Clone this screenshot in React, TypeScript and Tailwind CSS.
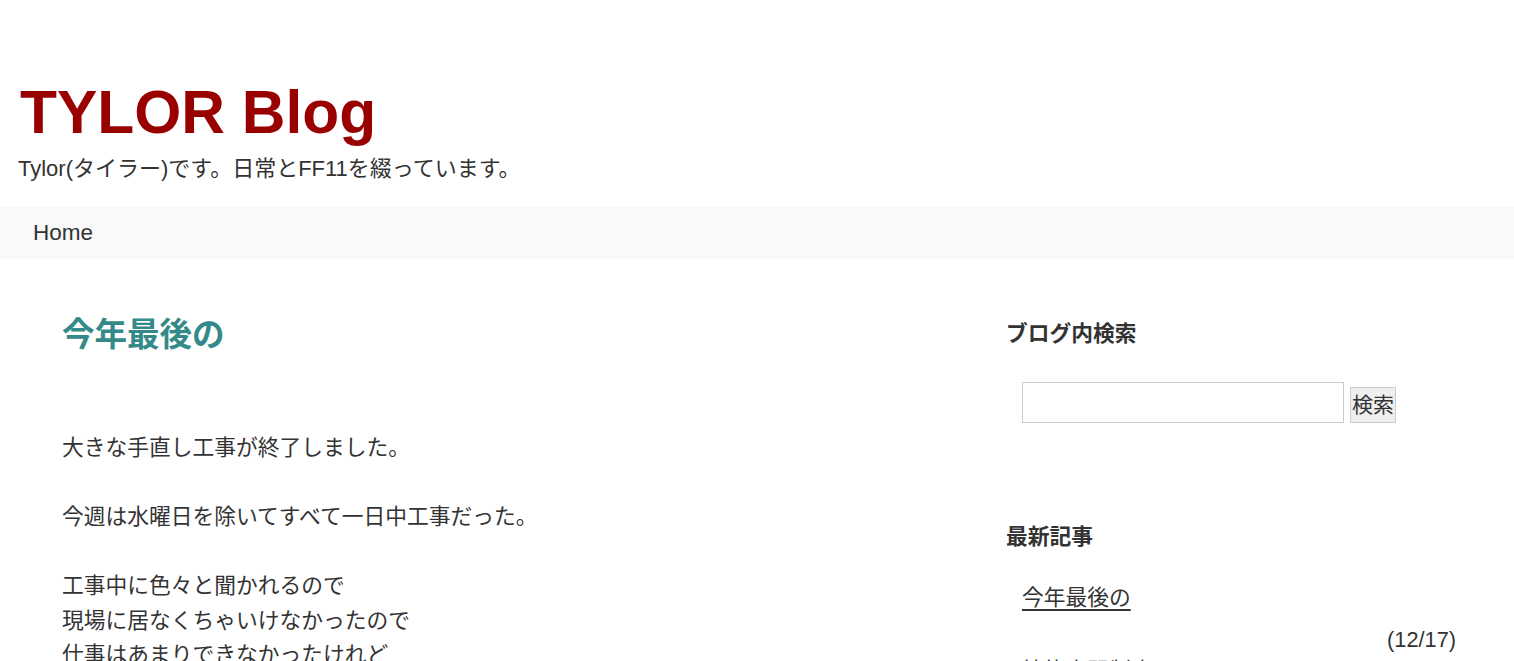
const font = { fontFamily: '"Liberation Sans", "Noto Sans CJK JP", sans-serif' };

export default function App() {
  return (
    <div className="bg-white text-[#333] text-[21.75px]" style={font}>
      <header className="px-[18px] pt-[76px] pb-[24px]">
        <h1 className="text-[60.5px] font-bold leading-[72px] text-[#990000] pl-[2px]">TYLOR Blog</h1>
        <p className="text-[22px] leading-[28px] mt-[7px]">Tylor(タイラー)です。日常とFF11を綴っています。</p>
      </header>
      <nav className="bg-[#f9f9f9] h-[52px] flex items-center px-[33px]">
        <a className="text-[22.5px]">Home</a>
      </nav>
      <div className="flex">
        <main className="w-[1006px] pl-[62px] pt-[54px]">
          <h2 className="text-[32.5px] font-bold leading-[44px] text-[#338a88]">今年最後の</h2>
          <div className="mt-[74px] leading-[34.5px]">
            <p>大きな手直し工事が終了しました。</p>
            <br />
            <p>今週は水曜日を除いてすべて一日中工事だった。</p>
            <br />
            <p>
              工事中に色々と聞かれるので
              <br />
              現場に居なくちゃいけなかったので
              <br />
              仕事はあまりできなかったけれど
            </p>
          </div>
        </main>
        <aside className="w-[450px] pt-[60px]">
          <h3 className="font-bold leading-[30px]">ブログ内検索</h3>
          <div className="flex items-start gap-[6px] pl-[16px] mt-[33px]">
            <input className="w-[322px] h-[41px] border border-[#cccccc] outline-none px-2" />
            <button className="mt-[5px] h-[36px] px-[1px] bg-[#efefef] border border-[#cccccc] text-[21px] leading-[34px]">検索</button>
          </div>
          <h3 className="font-bold leading-[30px] mt-[99px]">最新記事</h3>
          <ul className="pl-[16px] mt-[30px]">
            <li>
              <a className="underline underline-offset-4 leading-[30px]">今年最後の</a>
              <div className="text-right leading-[30px] mt-[10px]">(12/17)</div>
            </li>
            <li>
              <a className="underline underline-offset-4 leading-[30px]">技能実習制度</a>
            </li>
          </ul>
        </aside>
      </div>
    </div>
  );
}
